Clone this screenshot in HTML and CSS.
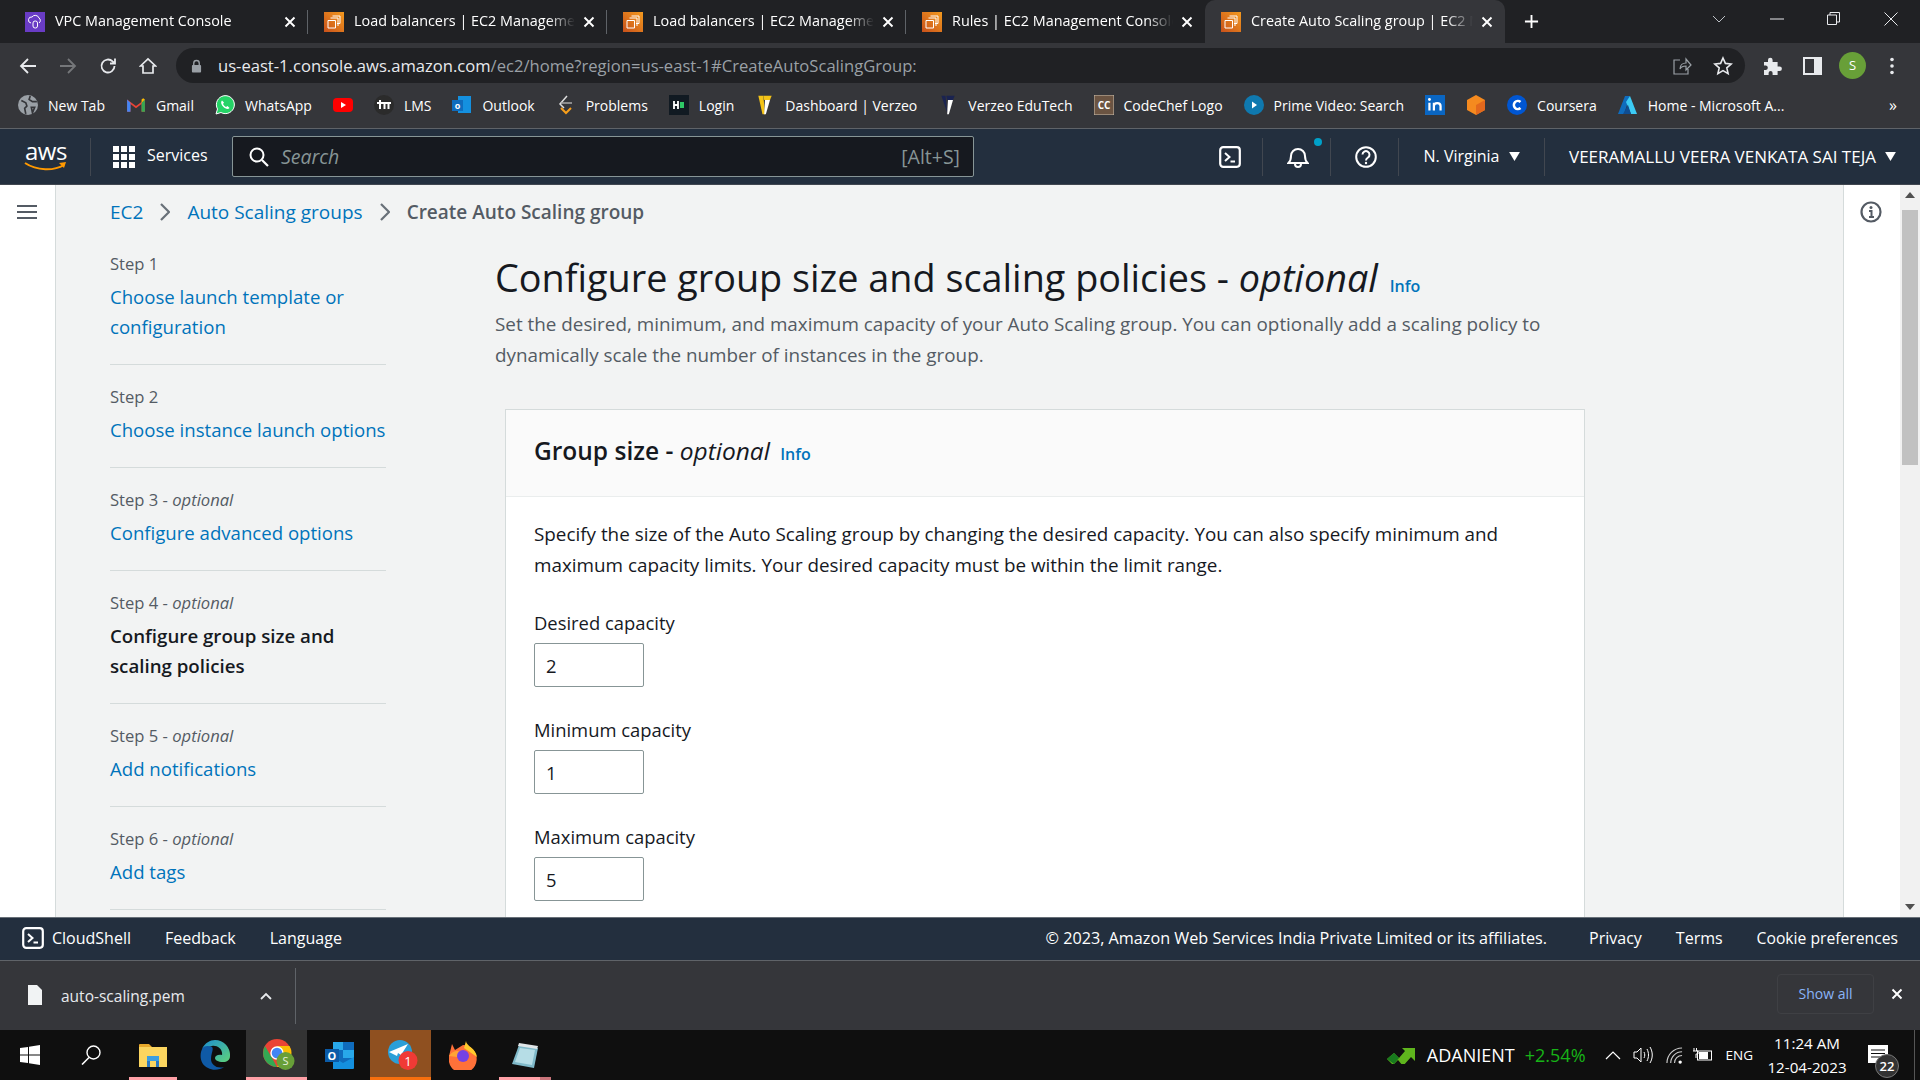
FILE: index.html
```html
<!DOCTYPE html>
<html lang="en">
<head>
<meta charset="utf-8">
<title>Create Auto Scaling group | EC2 Management Console</title>
<link rel="stylesheet" href="styles.css">
</head>
<body>
  <svg class="sprite" width="0" height="0">
    <defs>
      <linearGradient id="ec2-fill" x1="0" y1="1" x2="1" y2="0">
        <stop offset="0" stop-color="#c8511b"/>
        <stop offset="1" stop-color="#f39a1f"/>
      </linearGradient>
      <linearGradient id="edge-fill" x1="0" y1="0" x2="1" y2="1">
        <stop offset="0" stop-color="#1d8fd1"/>
        <stop offset="1" stop-color="#5ed37a"/>
      </linearGradient>
    </defs>
    <symbol id="ec2" viewBox="0 0 20 20">
      <rect width="20" height="20" fill="url(#ec2-fill)"/>
      <path d="M8.500 4H16v7.500h-3M6.500 6H14v8M4 8.500h7.500V16H4z" fill="none" stroke="#fff" stroke-width="1"/>
    </symbol>
    <symbol id="shell" viewBox="0 0 22 22">
      <rect x="1.2" y="1.2" width="19.6" height="19.6" rx="3" fill="none" stroke="#fff" stroke-width="2.2"/>
      <path d="M6 7l4.5 4L6 15M11.5 15.5H16" fill="none" stroke="#fff" stroke-width="2"/>
    </symbol>
    <symbol id="close" viewBox="0 0 12 12">
      <path d="M1.5 1.5l9 9M10.5 1.5l-9 9" fill="none" stroke="#fff" stroke-width="1.9"/>
    </symbol>
    <symbol id="caret" viewBox="0 0 12 10">
      <path d="M0 0h12L6 10z" fill="#fff"/>
    </symbol>
  </svg>

  <div class="tabstrip">
    <div class="tab">
      <svg class="favicon" viewBox="0 0 20 20"><rect width="20" height="20" fill="#693cc5"/><path d="M6 11a3 3 0 0 1 1-6 4 4 0 0 1 7 1 3 3 0 0 1 0 5" fill="none" stroke="#fff"/><rect x="8" y="9" width="4.5" height="7" rx="2" fill="none" stroke="#fff"/></svg>
      <span class="tab-title">VPC Management Console</span>
      <svg class="tab-close"><use href="#close"/></svg>
    </div>
    <div class="tab">
      <svg class="favicon"><use href="#ec2"/></svg>
      <span class="tab-title">Load balancers | EC2 Management Console</span>
      <svg class="tab-close"><use href="#close"/></svg>
    </div>
    <div class="tab">
      <svg class="favicon"><use href="#ec2"/></svg>
      <span class="tab-title">Load balancers | EC2 Management Console</span>
      <svg class="tab-close"><use href="#close"/></svg>
    </div>
    <div class="tab no-sep">
      <svg class="favicon"><use href="#ec2"/></svg>
      <span class="tab-title">Rules | EC2 Management Console</span>
      <svg class="tab-close"><use href="#close"/></svg>
    </div>
    <div class="tab active">
      <svg class="favicon"><use href="#ec2"/></svg>
      <span class="tab-title">Create Auto Scaling group | EC2 Management</span>
      <svg class="tab-close"><use href="#close"/></svg>
    </div>
    <svg class="new-tab" viewBox="0 0 16 16"><path d="M8 1v14M1 8h14" stroke="#fff" stroke-width="2"/></svg>
    <div class="window-controls">
      <svg width="14" height="8" viewBox="0 0 14 8"><path d="M1 1l6 6 6-6" fill="none" stroke="#bdc1c6"/></svg>
      <svg width="14" height="2" viewBox="0 0 14 2"><path d="M0 1h14" stroke="#e8eaed"/></svg>
      <svg width="13" height="13" viewBox="0 0 13 13"><path d="M.5 3h9v9.500h-9zM3 3V.5h9.500V10H9.500" fill="none" stroke="#e8eaed"/></svg>
      <svg width="14" height="14" viewBox="0 0 14 14"><path d="M.5.5l13 13M13.500.5l-13 13" stroke="#e8eaed"/></svg>
    </div>
  </div>

  <div class="toolbar">
    <svg class="nav-icon" viewBox="0 0 18 18"><path d="M17 9H2M9 2L2 9l7 7" fill="none" stroke="#e8eaed" stroke-width="1.8"/></svg>
    <svg class="nav-icon" viewBox="0 0 18 18"><path d="M1 9h15M9 2l7 7-7 7" fill="none" stroke="#75777a" stroke-width="1.8"/></svg>
    <svg class="nav-icon" viewBox="0 0 18 18"><path d="M15.500 9A6.500 6.500 0 1 1 13.600 4.400L16 6.500M16 1.500v5h-5" fill="none" stroke="#e8eaed" stroke-width="1.8"/></svg>
    <svg class="nav-icon" viewBox="0 0 18 18"><path d="M1.500 9L9 2l7.500 7H14v7H4V9z" fill="none" stroke="#e8eaed" stroke-width="1.7"/></svg>
    <div class="omnibox">
      <svg class="lock" viewBox="0 0 12 14"><path d="M3 6V4a3 3 0 0 1 6 0v2" fill="none" stroke="#9aa0a6" stroke-width="1.5"/><rect x="1" y="6" width="10" height="8" rx="1" fill="#9aa0a6"/></svg>
      <span class="url">us-east-1.console.aws.amazon.com<span class="url-rest">/ec2/home?region=us-east-1#CreateAutoScalingGroup:</span></span>
      <svg class="omni-icon" viewBox="0 0 20 20"><path d="M8 4H2v14h14v-5M8 13c0-4 3-6 6-6V3l5 6-5 5v-4c-3 0-5 1-6 3z" fill="none" stroke="#9aa0a6" stroke-width="1.2"/></svg>
      <svg class="omni-icon" viewBox="0 0 20 20"><path d="M10 2l2.400 5.400 5.800.6-4.400 3.900 1.300 5.700-5.100-3-5.100 3 1.300-5.700L1.800 8l5.800-.6z" fill="none" stroke="#e8eaed" stroke-width="1.6"/></svg>
    </div>
    <svg class="puzzle" viewBox="0 0 20 20"><path d="M2 6h4V4a2.300 2.300 0 0 1 4.600 0v2h5v4.500h2a2.300 2.300 0 0 1 0 4.600h-2V19h-5v-2a2 2 0 0 0-4 0v2H2v-5h2a2.300 2.300 0 0 0 0-4.500H2z" fill="#e8eaed"/></svg>
    <svg class="side-panel" viewBox="0 0 20 20"><path d="M2 2h17v16H2z" fill="none" stroke="#e8eaed" stroke-width="2"/><path d="M12 2h7v16h-7z" fill="#e8eaed"/></svg>
    <span class="avatar">S</span>
    <svg class="kebab" viewBox="0 0 4 18"><circle cx="2" cy="2.500" r="1.800" fill="#e8eaed"/><circle cx="2" cy="9" r="1.800" fill="#e8eaed"/><circle cx="2" cy="15.500" r="1.800" fill="#e8eaed"/></svg>
  </div>

  <div class="bookmarks">
    <a class="bm"><svg viewBox="0 0 18 18"><circle cx="9" cy="9" r="9" fill="#9aa0a6"/><path d="M3 5l4 2 1 3-2 2 1 5M11 1l-1 3 3 2 4 0M12 11l3 0-2 5z" fill="none" stroke="#35363a" stroke-width="1.5"/></svg>New Tab</a>
    <a class="bm"><svg viewBox="0 0 18 18"><path d="M1 15V4l8 6 8-6v11h-3V8l-5 4-5-4v7z" fill="#ea4335"/><path d="M1 15V4l3 3v8z" fill="#4285f4"/><path d="M14 15V7l3-3v11z" fill="#34a853"/><path d="M14 7l3-3-1.500-1L14 4z" fill="#fbbc04"/></svg>Gmail</a>
    <a class="bm"><svg viewBox="0 0 20 20"><path d="M1 19l1.500-5A9 9 0 1 1 6 17.500z" fill="#25d366" stroke="#fff"/><path d="M7 5.500c-2 2 0 5 1.500 6.500s4.500 3 6 1l-2-2-1.500 1c-1-.5-2.500-2-3-3l1-1.500z" fill="#fff"/></svg>WhatsApp</a>
    <a class="bm"><svg viewBox="0 0 20 20"><rect y="3" width="20" height="14" rx="4" fill="#f00"/><path d="M8 7l5 3-5 3z" fill="#fff"/></svg></a>
    <a class="bm"><svg viewBox="0 0 20 20"><circle cx="10" cy="10" r="10" fill="#2b2b2b"/><path d="M3 8h5M6 5v9M8 8h9M10.500 8v6M14.500 8v6" stroke="#fff" stroke-width="2" fill="none"/></svg>LMS</a>
    <a class="bm"><svg viewBox="0 0 20 20"><rect x="6" y="1" width="13" height="17" fill="#1490df"/><rect x="0" y="5" width="11" height="11" fill="#0f6cbd"/><text x="5.500" y="14" font-size="9" font-weight="700" fill="#fff" text-anchor="middle" font-family="Open Sans">o</text></svg>Outlook</a>
    <a class="bm"><svg viewBox="0 0 20 20"><path d="M11 1L4 9l4 4" fill="none" stroke="#ddd" stroke-width="1.5"/><path d="M5 8h11" stroke="#aaa" stroke-width="1.5"/><path d="M5 13l5 5 5-5" fill="none" stroke="#f89f1b" stroke-width="2"/></svg>Problems</a>
    <a class="bm"><svg viewBox="0 0 20 20"><rect width="20" height="20" fill="#111a22"/><path d="M5 6v8M9 6v8M5 10h4" stroke="#fff" stroke-width="1.8"/><rect x="11" y="7" width="4" height="6" fill="#2ec866"/></svg>Login</a>
    <a class="bm"><svg viewBox="0 0 16 24"><path d="M0 1h6l2 22H5z" fill="#f3c318"/><path d="M6 1h10l-2 5h-7z" fill="#f3c318"/><path d="M14 6L9 23H7l1-17z" fill="#fff"/></svg>Dashboard | Verzeo</a>
    <a class="bm"><svg viewBox="0 0 16 24"><path d="M0 1h5l2 20z" fill="#1a2350"/><path d="M6 1h10l-2 5H7z" fill="#1a2350"/><path d="M14 6L9 23H7l1-17z" fill="#fff"/></svg>Verzeo EduTech</a>
    <a class="bm"><svg viewBox="0 0 20 20"><rect width="20" height="20" fill="#6b5442" stroke="#cbbfae"/><text x="10" y="14" font-size="10" font-weight="700" fill="#fff" text-anchor="middle" font-family="Open Sans">CC</text></svg>CodeChef Logo</a>
    <a class="bm"><svg viewBox="0 0 20 20"><circle cx="10" cy="10" r="10" fill="#0f79af"/><path d="M8 6.500l5 3.500-5 3.500z" fill="#fff"/></svg>Prime Video: Search</a>
    <a class="bm"><svg viewBox="0 0 18 18"><rect width="18" height="18" fill="#0a66c2"/><path d="M4 7v7M8 14V7M8 10c0-3.500 6-3.500 6 0v4" stroke="#fff" stroke-width="2" fill="none"/><circle cx="4" cy="4" r="1.300" fill="#fff"/></svg></a>
    <a class="bm"><svg viewBox="0 0 20 20"><path d="M10 0l9 5v10l-9 5-9-5V5z" fill="#f58a1f"/><path d="M10 10l9-5v10l-9 5z" fill="#e3681d"/></svg></a>
    <a class="bm"><svg viewBox="0 0 20 20"><circle cx="10" cy="10" r="10" fill="#0056d2"/><path d="M13.500 7a4 4 0 1 0 0 6" fill="none" stroke="#fff" stroke-width="2.5"/></svg>Coursera</a>
    <a class="bm"><svg viewBox="0 0 20 20"><path d="M7 1h5L6 19H0z" fill="#0f6cbd"/><path d="M12 1l7 18h-6L8 7z" fill="#3ccbf4"/><path d="M10 10l3 9H5z" fill="#0f4d92"/></svg>Home - Microsoft A...</a>
    <span class="bm-more">»</span>
  </div>

  <header class="awsbar">
    <div class="aws-logo">
      <span>aws</span>
      <svg viewBox="0 0 44 10"><path d="M1 1c12 8 29 8 39 2" fill="none" stroke="#f90" stroke-width="2"/><path d="M35 1l7-1-2 6z" fill="#f90"/></svg>
    </div>
    <div class="services">
      <svg viewBox="0 0 22 22" fill="#fff"><rect width="6" height="6"/><rect x="8" width="6" height="6"/><rect x="16" width="6" height="6"/><rect y="8" width="6" height="6"/><rect x="8" y="8" width="6" height="6"/><rect x="16" y="8" width="6" height="6"/><rect y="16" width="6" height="6"/><rect x="8" y="16" width="6" height="6"/><rect x="16" y="16" width="6" height="6"/></svg>
      <span>Services</span>
    </div>
    <div class="searchbox">
      <svg viewBox="0 0 20 20"><circle cx="8" cy="8" r="6.500" fill="none" stroke="#fff" stroke-width="2"/><path d="M13 13l6 6" stroke="#fff" stroke-width="2.2"/></svg>
      <span class="search-text">Search</span>
      <span class="search-key">[Alt+S]</span>
    </div>
    <div class="aws-right">
      <div class="aws-cell icon-cell"><svg class="icon22"><use href="#shell"/></svg></div>
      <div class="aws-cell icon-cell">
        <svg class="icon22" viewBox="0 0 22 22"><path d="M1.500 17c2-2 2.500-3 2.500-7a7 7 0 0 1 14 0c0 4 .5 5 2.500 7z" fill="none" stroke="#fff" stroke-width="2"/><path d="M8 18a3 3 0 0 0 6 0" fill="none" stroke="#fff" stroke-width="2"/></svg>
        <span class="bell-dot"></span>
      </div>
      <div class="aws-cell icon-cell">
        <svg class="icon22" viewBox="0 0 22 22"><circle cx="11" cy="11" r="9.800" fill="none" stroke="#fff" stroke-width="2"/><path d="M7.500 8.500a3.500 3.500 0 1 1 5.500 3c-1.500 1-2 1.500-2 3" fill="none" stroke="#fff" stroke-width="2"/><circle cx="11" cy="17" r="1.200" fill="#fff"/></svg>
      </div>
      <div class="aws-cell cell-region">N. Virginia<svg class="caret"><use href="#caret"/></svg></div>
      <div class="aws-cell cell-user">VEERAMALLU VEERA VENKATA SAI TEJA<svg class="caret"><use href="#caret"/></svg></div>
    </div>
  </header>

  <div class="workspace">
    <div class="nav-rail">
      <svg viewBox="0 0 20 16"><path d="M0 2h20M0 8h20M0 14h20" stroke="#545b64" stroke-width="2.2"/></svg>
    </div>

    <div class="content">
      <nav class="breadcrumbs">
        <a>EC2</a>
        <svg viewBox="0 0 10 18"><path d="M1 1l8 8-8 8" fill="none" stroke="#687078" stroke-width="2.2"/></svg>
        <a>Auto Scaling groups</a>
        <svg viewBox="0 0 10 18"><path d="M1 1l8 8-8 8" fill="none" stroke="#687078" stroke-width="2.2"/></svg>
        <span>Create Auto Scaling group</span>
      </nav>

      <div class="columns">
        <ul class="steps">
          <li><small>Step 1</small><a>Choose launch template or configuration</a></li>
          <li><small>Step 2</small><a>Choose instance launch options</a></li>
          <li><small>Step 3 - <i>optional</i></small><a>Configure advanced options</a></li>
          <li><small>Step 4 - <i>optional</i></small><b>Configure group size and scaling policies</b></li>
          <li><small>Step 5 - <i>optional</i></small><a>Add notifications</a></li>
          <li><small>Step 6 - <i>optional</i></small><a>Add tags</a></li>
        </ul>

        <main class="main">
          <h1>Configure group size and scaling policies - <i>optional</i> <a class="info">Info</a></h1>
          <p class="lead">Set the desired, minimum, and maximum capacity of your Auto Scaling group. You can optionally add a scaling policy to dynamically scale the number of instances in the group.</p>

          <section class="card">
            <div class="card-head">
              <h2>Group size - <i>optional</i> <a class="info">Info</a></h2>
            </div>
            <div class="card-body">
              <p>Specify the size of the Auto Scaling group by changing the desired capacity. You can also specify minimum and maximum capacity limits. Your desired capacity must be within the limit range.</p>
              <label class="field">Desired capacity<input value="2"></label>
              <label class="field">Minimum capacity<input value="1"></label>
              <label class="field">Maximum capacity<input value="5"></label>
            </div>
          </section>
        </main>
      </div>
    </div>

    <div class="tool-rail">
      <svg viewBox="0 0 22 22"><circle cx="11" cy="11" r="9.500" fill="none" stroke="#545b64" stroke-width="2.2"/><path d="M9 10h2.500v6M9 16h5" fill="none" stroke="#545b64" stroke-width="2"/><circle cx="11" cy="6.500" r="1.500" fill="#545b64"/></svg>
    </div>
    <div class="scrollbar">
      <span class="arrow up"></span>
      <span class="thumb"></span>
      <span class="arrow down"></span>
    </div>
  </div>

  <footer class="awsfooter">
    <a class="cs"><svg class="icon22"><use href="#shell"/></svg>CloudShell</a>
    <a>Feedback</a>
    <a>Language</a>
    <span class="copy">© 2023, Amazon Web Services India Private Limited or its affiliates.</span>
    <a>Privacy</a>
    <a>Terms</a>
    <a class="cookie">Cookie preferences</a>
  </footer>

  <div class="downloads">
    <div class="dl-item">
      <svg class="dl-file" viewBox="0 0 14 20"><path d="M0 0h9l5 5v15H0z" fill="#f1f3f4"/></svg>
      <span class="dl-name">auto-scaling.pem</span>
      <svg class="dl-chev" viewBox="0 0 12 8"><path d="M1 7l5-5 5 5" fill="none" stroke="#e8eaed" stroke-width="1.8"/></svg>
    </div>
    <span class="show-all">Show all</span>
    <svg class="dl-close"><use href="#close"/></svg>
  </div>

  <div class="taskbar">
    <span class="task start"><svg viewBox="0 0 20 20" fill="#fff"><path d="M0 3l8-1v7.500H0zM9 1.800L20 0v9.500H9zM0 10.500h8V18l-8-1zM9 10.500h11V20L9 18.200z"/></svg></span>
    <span class="task search"><svg viewBox="0 0 20 20"><circle cx="12.500" cy="7.500" r="6.500" fill="none" stroke="#fff" stroke-width="1.4"/><path d="M8 12.500L1 19.500" stroke="#fff" stroke-width="1.6"/></svg></span>
    <span class="task open"><svg class="ti-explorer" viewBox="0 0 28 23"><path d="M0 1a1 1 0 0 1 1-1h9l3 3H0z" fill="#e8a92c"/><path d="M0 3h28v20H0z" fill="#fbd55f"/><path d="M8 12h12v5H8z" fill="#3b9ee0"/><path d="M8 17h3v6H8zM17 17h3v6h-3z" fill="#2a77c0"/></svg></span>
    <span class="task"><svg class="ti-edge" viewBox="0 0 30 30"><path d="M15 0a15 15 0 0 1 15 16c0 4-3 6-7 6-5 0-8-2-8-4 0-2 3-4 7-3 1-6-5-10-10-9C7 7 4 11 2.500 8 5 3 10 0 15 0z" fill="url(#edge-fill)"/><path d="M2.500 8C-1 15 0 24 8 28c5 3 12 2 16-1-7 2-13-2-13-8 0-6 3-10 1-12C8 5 4 6 2.500 8z" fill="#0f5aa6"/></svg></span>
    <span class="task open current"><svg class="ti-chrome" viewBox="0 0 32 32"><circle cx="14" cy="14" r="14" fill="#ea4335"/><path d="M14 28A14 14 0 0 1 2 7l7 12z" fill="#34a853"/><path d="M14 7h12.500A14 14 0 0 1 14 28l6-10z" fill="#fbbc04"/><circle cx="14" cy="14" r="6" fill="#4285f4" stroke="#fff" stroke-width="1.4"/><circle cx="22.500" cy="22" r="9" fill="#689f38"/><text x="22.500" y="26" font-size="11" fill="#e6efdc" text-anchor="middle" font-family="Open Sans">S</text></svg></span>
    <span class="task"><svg class="ti-outlook" viewBox="0 0 29 27"><path d="M8 0h21v24H8z" fill="#0f6cbd"/><path d="M8 0h10v8H8zM18 8h11v8H18z" fill="#28a8ea"/><path d="M8 15l10 6 11-6v11a1 1 0 0 1-1 1H8z" fill="#1490df"/><rect y="7" width="14" height="13" fill="#0a5ba8"/><text x="7" y="17.500" font-size="11" font-weight="700" fill="#fff" text-anchor="middle" font-family="Open Sans">O</text></svg></span>
    <span class="task open tile"><svg class="ti-telegram" viewBox="0 0 31 30"><circle cx="13" cy="12" r="12" fill="#2a9fd8"/><path d="M2 12l19-8-7 11-3-2-1 3z" fill="#fff"/><circle cx="21" cy="20.500" r="9.500" fill="#f03a35"/><text x="21" y="25.500" font-size="13" fill="#fff" text-anchor="middle" font-family="Open Sans">1</text></svg></span>
    <span class="task"><svg class="ti-firefox" viewBox="0 0 28 29"><path d="M14 4a14 14 0 1 1-14 11L3 3l3 6z" fill="#ff7139"/><path d="M17 0c0 5 10 7 11 16L15 7z" fill="#ffca2c"/><path d="M0 15c3-5 8-6 14-4l-6 5z" fill="#ffa436"/><circle cx="14" cy="15" r="6" fill="#7542e5"/></svg></span>
    <span class="task open part"><svg class="ti-note" viewBox="0 0 26 26"><path d="M7 3l19 3-4 20L0 22z" fill="#7fb9c9"/><path d="M8 6l15 2-3 15L3 20z" fill="#b6dde6"/><path d="M7 1l19 3-1 3L6 4z" fill="#e0e6e8"/></svg></span>

    <div class="tray">
      <svg class="stock" viewBox="0 0 30 18"><path d="M0 13l7-6 5 5 6-7-3-3h13v13l-4-4-8 9-5-6-5 5z" fill="#5fb51d"/><path d="M0 13l7-6 5 5-5 6z" fill="#187a1e"/></svg>
      <span class="ticker">ADANIENT</span>
      <span class="gain">+2.54%</span>
      <svg class="tray-chev" viewBox="0 0 16 9"><path d="M1 8l7-7 7 7" fill="none" stroke="#fff" stroke-width="1.2"/></svg>
      <svg class="tray-ico" viewBox="0 0 20 20"><path d="M1 7h3l4-4v14l-4-4H1zM11 7c1 2 1 4 0 6M14 4c2 4 2 8 0 12M17 2c3 5 3 11 0 16" fill="none" stroke="#fff" stroke-width="1"/></svg>
      <svg class="tray-ico small" viewBox="0 0 18 18"><path d="M1 17A16 16 0 0 1 17 1M5 17A12 12 0 0 1 17 5M9 17a8 8 0 0 1 8-8" fill="none" stroke="#ccc" stroke-width="1.2"/><circle cx="15" cy="16" r="1.8" fill="#fff"/></svg>
      <svg class="tray-ico" viewBox="0 0 20 14"><path d="M1 0v3M3.500 0v3M0 3h5v3H3v4" fill="none" stroke="#fff"/><rect x="4.500" y="3" width="14" height="9" fill="none" stroke="#fff"/><rect x="6" y="4" width="9" height="7" fill="#fff"/></svg>
      <span class="lang">ENG</span>
      <div class="clock"><span>11:24 AM</span><span>12-04-2023</span></div>
      <div class="notif">
        <svg viewBox="0 0 20 18"><path d="M0 0h20v18H0z" fill="#fff"/><path d="M3 5h14M3 8.500h14M3 12h9" stroke="#0f0f0f" stroke-width="1.2"/></svg>
        <span>22</span>
      </div>
    </div>
  </div>
</body>
</html>
```

FILE: styles.css
```css
* {
    box-sizing: border-box;
}

html, body {
    margin: 0;
    height: 100%;
}

body {
    width: 1920px;
    height: 1080px;
    overflow: hidden;
    display: flex;
    flex-direction: column;
    font-family: "Open Sans", sans-serif;
    color: #16191f;
    background: #fff;
}

a {
    text-decoration: none;
}

.sprite {
    position: absolute;
}

/* browser tabs */
.tabstrip {
    height: 43px;
    flex: none;
    display: flex;
    align-items: center;
    padding-left: 9px;
    background: #202124;
    color: #fff;
    font-size: 14.4px;
}

.tab {
    width: 299px;
    height: 43px;
    flex: none;
    display: flex;
    align-items: center;
    padding: 0 12px 0 16px;
    position: relative;
}

.tab::after {
    content: "";
    position: absolute;
    right: 0;
    top: 10px;
    height: 24px;
    width: 1px;
    background: #5f6368;
}

.tab.no-sep::after {
    display: none;
}

.tab.active {
    width: 300px;
    background: #35363a;
    border-radius: 10px 10px 0 0;
}

.tab.active::after {
    display: none;
}

.favicon {
    width: 20px;
    height: 20px;
    flex: none;
    margin-right: 10px;
}

.tab-title {
    flex: 1;
    white-space: nowrap;
    overflow: hidden;
    padding-bottom: 2px;
    -webkit-mask-image: linear-gradient(to right, #000 88%, transparent 100%);
    mask-image: linear-gradient(to right, #000 88%, transparent 100%);
}

.tab-close {
    width: 12px;
    height: 12px;
    flex: none;
    margin-left: 8px;
}

.new-tab {
    width: 15px;
    height: 15px;
    margin-left: 19px;
}

.window-controls {
    margin-left: auto;
    width: 208px;
    padding-right: 22px;
    display: flex;
    align-items: center;
    justify-content: space-between;
    margin-top: -6px;
}

/* address bar */
.toolbar {
    height: 45px;
    flex: none;
    display: flex;
    align-items: center;
    background: #35363a;
    padding-left: 19px;
}

.nav-icon {
    width: 18px;
    height: 18px;
    margin-right: 22px;
    flex: none;
}

.omnibox {
    width: 1569px;
    height: 35px;
    margin-left: -3px;
    border-radius: 18px;
    background: #202124;
    display: flex;
    align-items: center;
    padding: 0 12px 0 15px;
    font-size: 16.6px;
    color: #e8eaed;
    flex: none;
}

.lock {
    width: 11px;
    height: 14px;
    margin-right: 16px;
    flex: none;
}

.url {
    flex: 1;
    white-space: nowrap;
}

.url-rest {
    color: #9aa0a6;
}

.omni-icon {
    width: 20px;
    height: 20px;
    margin-left: 21px;
}

.puzzle {
    width: 20px;
    height: 20px;
    margin-left: 17px;
}

.side-panel {
    width: 20px;
    height: 20px;
    margin-left: 20px;
}

.avatar {
    width: 27px;
    height: 27px;
    margin-left: 17px;
    border-radius: 50%;
    background: #689f38;
    color: #fff;
    font-size: 13px;
    text-align: center;
    line-height: 27px;
}

.kebab {
    width: 4px;
    height: 18px;
    margin-left: 24px;
}

/* bookmarks */
.bookmarks {
    height: 41px;
    flex: none;
    display: flex;
    align-items: center;
    gap: 21px;
    padding: 0 0 6px 18px;
    background: #35363a;
    border-bottom: 1px solid #5f6368;
    color: #fff;
    font-size: 14px;
    position: relative;
}

.bm {
    display: flex;
    align-items: center;
    gap: 10px;
    white-space: nowrap;
    color: #fff;
}

.bm svg {
    width: 20px;
    height: 20px;
    flex: none;
}

.bm-more {
    position: absolute;
    right: 23px;
    top: 6px;
    font-size: 16px;
}

/* aws console header */
.awsbar {
    height: 56px;
    flex: none;
    display: flex;
    align-items: center;
    background: #232f3e;
    border-bottom: 1px solid #414750;
    color: #fff;
    font-size: 16px;
}

.aws-logo {
    width: 91px;
    height: 38px;
    padding-left: 25px;
    position: relative;
    border-right: 1px solid #414750;
    flex: none;
}

.aws-logo span {
    display: block;
    font-size: 24px;
    line-height: 26px;
    letter-spacing: -.5px;
}

.aws-logo svg {
    position: absolute;
    left: 24px;
    top: 24px;
    width: 44px;
    height: 10px;
}

.services {
    width: 141px;
    flex: none;
    display: flex;
    align-items: center;
    gap: 12px;
    padding-left: 22px;
}

.services span {
    padding-bottom: 3px;
}

.services svg {
    width: 22px;
    height: 22px;
}

.searchbox {
    width: 742px;
    height: 41px;
    flex: none;
    display: flex;
    align-items: center;
    padding: 0 13px 0 16px;
    background: #16191f;
    border: 1px solid #879596;
    border-radius: 2px;
    color: #879596;
    font-size: 19.5px;
}

.searchbox svg {
    width: 20px;
    height: 20px;
    margin-right: 12px;
}

.search-text {
    font-style: italic;
    flex: 1;
}

.aws-right {
    margin-left: auto;
    display: flex;
    align-items: center;
    height: 38px;
    white-space: nowrap;
}

.aws-cell {
    height: 38px;
    display: flex;
    align-items: center;
    justify-content: center;
    position: relative;
    border-right: 1px solid #414750;
}

.aws-cell:last-child {
    border-right: 0;
}

.icon-cell {
    width: 68px;
    padding-left: 2px;
}

.cell-region {
    width: 146px;
    padding-bottom: 1px;
}

.cell-user {
    width: 375px;
    padding-bottom: 1px;
    font-size: 17px;
}

.icon22 {
    width: 22px;
    height: 22px;
    flex: none;
}

.bell-dot {
    position: absolute;
    left: 51px;
    top: 0;
    width: 8px;
    height: 8px;
    border-radius: 50%;
    background: #00a1c9;
}

.caret {
    width: 11px;
    height: 9px;
    margin-left: 9px;
}

/* page area */
.workspace {
    height: 733px;
    flex: none;
    display: flex;
    overflow: hidden;
    border-bottom: 1px solid #687078;
}

.nav-rail {
    width: 56px;
    flex: none;
    border-right: 1px solid #d5dbdb;
    padding: 19px 0 0 17px;
}

.nav-rail svg {
    width: 20px;
    height: 16px;
    display: block;
}

.content {
    flex: 1;
    background: #f2f3f3;
    padding-left: 54px;
    overflow: hidden;
    font-size: 18.85px;
}

.breadcrumbs {
    height: 54px;
    display: flex;
    align-items: center;
    gap: 17px;
    color: #545b64;
    font-size: 19px;
    font-weight: 600;
}

.breadcrumbs a {
    color: #0073bb;
    font-weight: 400;
}

.breadcrumbs svg {
    width: 10px;
    height: 18px;
}

.columns {
    display: flex;
    gap: 109px;
}

.steps {
    width: 276px;
    flex: none;
    list-style: none;
    margin: 14px 0 0;
    padding: 0;
    font-size: 18.6px;
    line-height: 30px;
}

.steps li {
    padding-bottom: 22px;
    margin-bottom: 21px;
    border-bottom: 1px solid #d5dbdb;
}

.steps small {
    display: block;
    margin-bottom: 7px;
    font-size: 16.6px;
    line-height: 22px;
    color: #545b64;
}

.steps a {
    color: #0073bb;
}

.steps b {
    font-size: 18.7px;
    font-weight: 600;
}

.main {
    flex: 1;
}

h1 {
    margin: 14px 0 0;
    height: 50px;
    font-size: 37.8px;
    line-height: 50px;
    font-weight: 400;
    white-space: nowrap;
}

.info {
    font-size: 16px;
    font-weight: 600;
    font-style: normal;
    color: #0073bb;
    margin-left: 2px;
}

.lead {
    margin: 6px 0 0;
    width: 1060px;
    line-height: 31px;
    color: #545b64;
}

.card {
    width: 1080px;
    margin: 38px 0 0 10px;
    background: #fff;
    border: 1px solid #d5dbdb;
    border-bottom: 0;
}

.card-head {
    height: 87px;
    padding: 0 28px 6px;
    display: flex;
    align-items: center;
    background: #fafafa;
    border-bottom: 1px solid #eaeded;
}

h2 {
    margin: 0;
    font-size: 24.5px;
    font-weight: 600;
}

h2 i {
    font-weight: 400;
}

h2 .info {
    margin-left: 4px;
}

.card-body {
    padding: 22px 28px 40px;
}

.card-body p {
    margin: 0 0 30px;
    line-height: 31px;
}

.field {
    display: block;
    font-size: 18.4px;
    line-height: 24px;
    margin-bottom: 31px;
}

.field input {
    display: block;
    width: 110px;
    height: 44px;
    margin-top: 8px;
    padding: 0 11px;
    border: 1px solid #879596;
    border-radius: 2px;
    font: inherit;
    color: #16191f;
    background: #fff;
}

.tool-rail {
    width: 57px;
    flex: none;
    border-left: 1px solid #d5dbdb;
    padding: 16px 0 0 16px;
}

.tool-rail svg {
    width: 22px;
    height: 22px;
    display: block;
}

.scrollbar {
    width: 20px;
    flex: none;
    background: #f1f1f1;
    position: relative;
}

.thumb {
    position: absolute;
    left: 2px;
    top: 25px;
    width: 16px;
    height: 255px;
    background: #c1c1c1;
}

.arrow {
    position: absolute;
    left: 5px;
    width: 0;
    height: 0;
    border-left: 5px solid transparent;
    border-right: 5px solid transparent;
}

.arrow.up {
    top: 7px;
    border-bottom: 6px solid #505050;
}

.arrow.down {
    bottom: 7px;
    border-top: 6px solid #505050;
}

/* console footer */
.awsfooter {
    height: 42px;
    flex: none;
    display: flex;
    align-items: center;
    gap: 34px;
    padding: 0 22px 3px 22px;
    background: #232f3e;
    color: #fff;
    font-size: 16px;
    white-space: nowrap;
}

.awsfooter a {
    color: #fff;
}

.cs {
    display: flex;
    align-items: center;
    gap: 8px;
}

.copy {
    margin-left: auto;
    margin-right: 8px;
    font-size: 16.2px;
}

.cookie {
    font-size: 15.7px;
}

/* downloads shelf */
.downloads {
    height: 70px;
    flex: none;
    display: flex;
    align-items: center;
    background: #35363a;
    border-top: 1px solid #5f6368;
    color: #e8eaed;
    font-size: 15.5px;
    position: relative;
}

.dl-item {
    width: 296px;
    height: 56px;
    display: flex;
    align-items: center;
    padding-left: 28px;
    border-right: 1px solid #5f6368;
}

.dl-file {
    width: 14px;
    height: 20px;
    margin-top: -2px;
}

.dl-name {
    margin-left: 19px;
    flex: 1;
}

.dl-chev {
    width: 12px;
    height: 8px;
    margin-right: 23px;
}

.show-all {
    margin-left: auto;
    margin-right: 17px;
    margin-bottom: 4px;
    width: 97px;
    height: 40px;
    line-height: 38px;
    text-align: center;
    font-size: 14px;
    color: #8ab4f8;
    border: 1px solid #3f4044;
    border-radius: 4px;
}

.dl-close {
    width: 12px;
    height: 12px;
    margin-right: 17px;
    margin-bottom: 4px;
}

/* windows taskbar */
.taskbar {
    flex: 1;
    display: flex;
    background: #0f0f0f;
    color: #fff;
}

.task {
    width: 62px;
    display: flex;
    align-items: center;
    justify-content: center;
    flex: none;
    position: relative;
}

.task.start {
    width: 60px;
}

.task.start svg, .task.search svg {
    width: 20px;
    height: 20px;
}

.ti-explorer {
    width: 28px;
    height: 23px;
}

.ti-edge {
    width: 30px;
    height: 30px;
}

.ti-chrome {
    width: 32px;
    height: 32px;
    margin-left: 3px;
}

.ti-outlook {
    width: 29px;
    height: 27px;
}

.ti-telegram {
    width: 31px;
    height: 30px;
    margin-left: 3px;
}

.ti-firefox {
    width: 28px;
    height: 29px;
}

.ti-note {
    width: 26px;
    height: 26px;
}

.task.open::after {
    content: "";
    position: absolute;
    left: 7px;
    right: 7px;
    bottom: 0;
    height: 3px;
    background: #ffa0a6;
}

.task.part::after {
    background: linear-gradient(to right, #ffa0a6 78%, #c9747a 78%);
    left: 5px;
    right: 5px;
}

.task.current {
    background: linear-gradient(to right, #333 61px, #0f0f0f 61px);
}

.task.current::after {
    left: 0;
    right: 1px;
}

.task.tile {
    background: linear-gradient(to right, #8f5020 61px, #0f0f0f 61px);
}

.task.tile::after {
    left: 0;
    right: 1px;
    background: #f76f0e;
}

.tray {
    margin-left: auto;
    display: flex;
    align-items: center;
    padding-right: 6px;
    border-right: 1px solid #555;
    margin-right: 5px;
    font-size: 15.2px;
    white-space: nowrap;
}

.stock {
    width: 30px;
    height: 18px;
    margin-right: 10px;
}

.ticker {
    font-size: 18px;
    margin-right: 10px;
}

.gain {
    font-size: 18px;
    color: #17b317;
    margin-right: 19px;
}

.tray-chev {
    width: 16px;
    height: 9px;
    margin-right: 12px;
}

.tray-ico {
    width: 20px;
    height: 20px;
    margin-right: 13px;
}

.tray-ico.small {
    width: 17px;
    height: 17px;
    margin-right: 10px;
}

.lang {
    font-size: 13.5px;
}

.clock {
    width: 112px;
    margin-left: -2px;
    display: flex;
    flex-direction: column;
    align-items: center;
    line-height: 24px;
}

.notif {
    width: 45px;
    height: 50px;
    position: relative;
    padding: 15px 0 0 5px;
}

.notif svg {
    width: 20px;
    height: 18px;
    display: block;
}

.notif span {
    position: absolute;
    left: 12px;
    top: 24px;
    width: 24px;
    height: 24px;
    border-radius: 50%;
    background: #333;
    border: 1px solid #777;
    text-align: center;
    font-size: 13px;
    font-weight: 600;
    line-height: 22px;
}
```
